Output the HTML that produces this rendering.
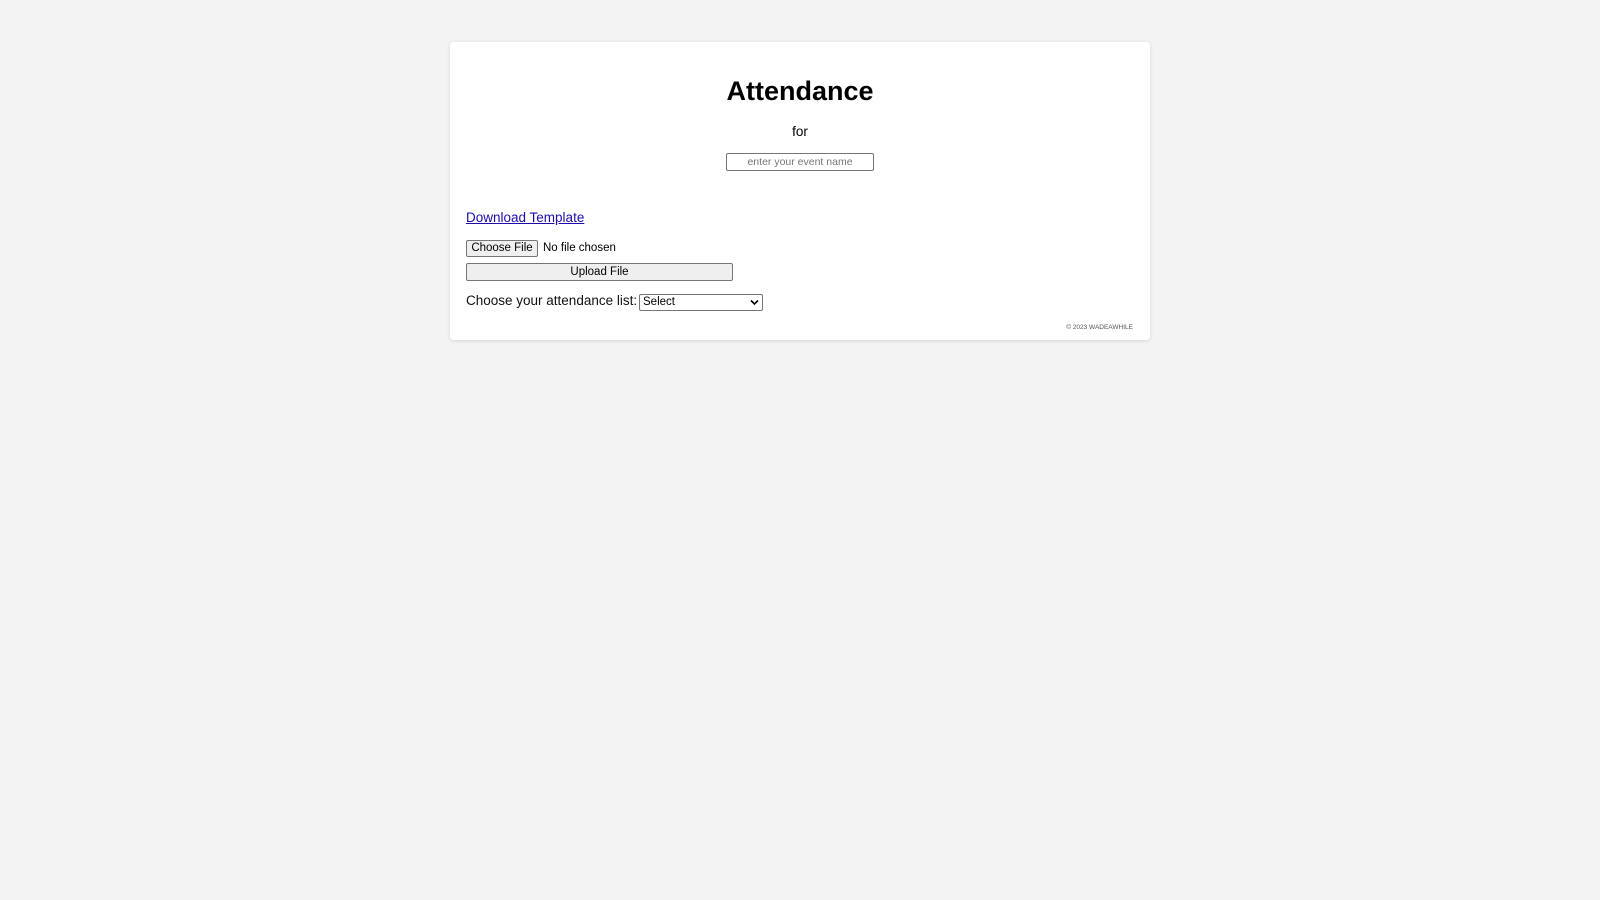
<!DOCTYPE html>
<html><head><style>
body{margin:0;background:#f3f3f3;font-family:"Liberation Sans",Arial,sans-serif;width:1600px;height:900px;position:relative;overflow:hidden}
.card{position:absolute;left:450px;top:42px;width:700px;height:298px;background:#fff;border-radius:4px;box-shadow:0 1px 4px rgba(0,0,0,.12)}
.a{position:absolute;white-space:nowrap}
h1{margin:0;font-size:27px;font-weight:bold;position:absolute;left:0;width:700px;text-align:center;top:34px}
.btn{background:#efefef;border:1px solid #767676;border-radius:2px;font-size:11.5px;color:#000;text-align:center;box-sizing:border-box}
</style></head><body>
<div class="card">
<h1>Attendance</h1>
<div class="a" style="left:0;width:700px;text-align:center;top:82px;font-size:13.5px">for</div>
<div class="a" style="left:276px;top:111px;width:148px;height:18px;border:1px solid #767676;box-sizing:border-box;border-radius:2px;font-size:10.5px;color:#757575;text-align:center;line-height:16px">enter your event name</div>
<div class="a" style="left:16px;top:168px;font-size:13.5px;color:#1a0dab;text-decoration:underline">Download Template</div>
<div class="a btn" style="left:16px;top:198px;width:72px;height:17px;line-height:15px">Choose File</div>
<div class="a" style="left:93px;top:200px;font-size:11.5px">No file chosen</div>
<div class="a btn" style="left:16px;top:221px;width:267px;height:18px;line-height:16px">Upload File</div>
<div class="a" style="left:16px;top:251px;font-size:13.5px;color:#111">Choose your attendance list:</div>
<div class="a" style="left:189px;top:252px;width:124px;height:17px;border:1px solid #767676;box-sizing:border-box;border-radius:2px;font-size:11.5px;line-height:15px;padding-left:3px">Select<svg style="position:absolute;right:3px;top:4px" width="9" height="7" viewBox="0 0 9 7"><path d="M1 1.5L4.5 5L8 1.5" stroke="#000" stroke-width="1.6" fill="none"/></svg></div>
<div class="a" style="right:17px;top:282px;font-size:6.5px;color:#555">© 2023 WADEAWHILE</div>
</div>
</body></html>
